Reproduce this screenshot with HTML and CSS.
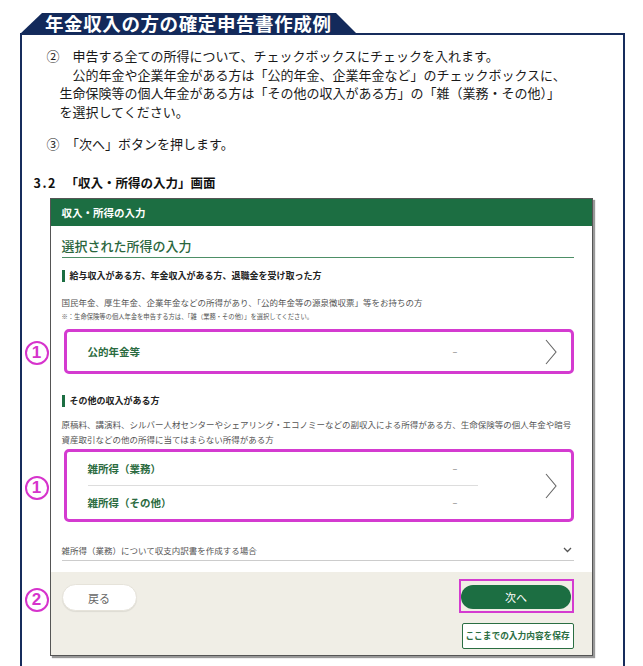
FILE: index.html
```html
<!DOCTYPE html>
<html lang="ja">
<head>
<meta charset="utf-8">
<link rel="stylesheet" href="styles.css">
</head>
<body>
<div class="page">
  <div class="tab">年金収入の方の確定申告書作成例</div>
  <div class="box">
    <div class="steps">
      <p class="step">
        <span class="l1">②　申告する全ての所得について、チェックボックスにチェックを入れます。</span>
        <span class="l2">公的年金や企業年金がある方は「公的年金、企業年金など」のチェックボックスに、</span>
        <span class="l3">生命保険等の個人年金がある方は「その他の収入がある方」の「雑（業務・その他）」</span>
        <span class="l3">を選択してください。</span>
      </p>
      <p class="step step3"><span class="l1">③　「次へ」ボタンを押します。</span></p>
    </div>
    <h2 class="sub"><span class="num">3.2</span>「収入・所得の入力」画面</h2>
    <div class="shot">
      <div class="shot-head">収入・所得の入力</div>
      <div class="shot-body">
        <div class="title">選択された所得の入力</div>
        <div class="sec-head">給与収入がある方、年金収入がある方、退職金を受け取った方</div>
        <div class="desc">国民年金、厚生年金、企業年金などの所得があり、「公的年金等の源泉徴収票」等をお持ちの方</div>
        <div class="note">※：生命保険等の個人年金を申告する方は、「雑（業務・その他）」を選択してください。</div>
        <div class="card card1">
          <span class="name">公的年金等</span>
          <span class="dash">–</span>
          <svg class="chev" width="12" height="26" viewBox="0 0 12 26"><path d="M1 1 L11 13 L1 25" fill="none" stroke="#666" stroke-width="1.1"/></svg>
        </div>
        <div class="sec-head sec2">その他の収入がある方</div>
        <div class="desc desc2">原稿料、講演料、シルバー人材センターやシェアリング・エコノミーなどの副収入による所得がある方、生命保険等の個人年金や暗号資産取引などの他の所得に当てはまらない所得がある方</div>
        <div class="card card2">
          <div class="rows">
            <div class="row"><span class="name">雑所得（業務）</span><span class="dash">–</span></div>
            <div class="row"><span class="name">雑所得（その他）</span><span class="dash">–</span></div>
          </div>
          <svg class="chev" width="12" height="26" viewBox="0 0 12 26"><path d="M1 1 L11 13 L1 25" fill="none" stroke="#666" stroke-width="1.1"/></svg>
        </div>
        <div class="collapse">
          <span>雑所得（業務）について収支内訳書を作成する場合</span>
          <svg width="9" height="6" viewBox="0 0 9 6"><path d="M1 1 L4.5 4.5 L8 1" fill="none" stroke="#555" stroke-width="1.3"/></svg>
        </div>
      </div>
      <div class="shot-foot">
        <div class="foot-row">
          <span class="btn-back">戻る</span>
          <span class="hl"><span class="btn-next">次へ</span></span>
        </div>
        <div class="foot-save"><span class="btn-save">ここまでの入力内容を保存</span></div>
      </div>
      <span class="mark m1">1</span>
      <span class="mark m2">1</span>
      <span class="mark m3">2</span>
    </div>
  </div>
</div>
</body>
</html>
```
FILE: styles.css
```css
html, body {
  margin: 0;
  padding: 0;
  background: #fff;
}
body {
  font-family: "Noto Sans CJK JP", "Noto Sans", sans-serif;
  color: #1a1a1a;
}
.page {
  padding: 13px 18px 0 20px;
}
.tab {
  width: 337px;
  height: 21px;
  line-height: 21px;
  background: #132a5b;
  color: #fff;
  font-weight: 700;
  font-size: 18.5px;
  letter-spacing: 0.6px;
  padding-left: 25px;
  box-sizing: border-box;
  clip-path: polygon(22px 0, calc(100% - 21px) 0, 100% 100%, 0 100%);
  white-space: nowrap;
}
.box {
  margin-top: -1px;
  border: 2.5px solid #172c5c;
  border-bottom: none;
  height: 640px;
}
.steps {
  padding-top: 12px;
  font-size: 13px;
  line-height: 18.5px;
  color: #1a1a1a;
}
.step {
  margin: 0;
}
.step span {
  display: block;
  white-space: nowrap;
}
.l1 { padding-left: 24.5px; }
.l2 { padding-left: 50.5px; }
.l3 { padding-left: 37.5px; }
.step3 {
  margin-top: 14px;
}
.sub {
  margin: 20px 0 0 0;
  padding-left: 11.5px;
  font-size: 12.5px;
  line-height: 18px;
  font-weight: 700;
  color: #111;
}
.sub .num {
  display: inline-block;
  width: 32px;
  letter-spacing: 1.5px;
}
.shot {
  position: relative;
  margin: 6px 0 0 27.5px;
  width: 543px;
  border: 1px solid #555;
  box-sizing: border-box;
  box-shadow: 2px 2px 1px #999;
  background: #fff;
}
.shot-head {
  height: 27px;
  line-height: 27px;
  background: #1c6e42;
  color: #fff;
  font-size: 10.5px;
  font-weight: 700;
  padding-left: 11px;
}
.shot-body {
  padding: 0 18px 0 11px;
}
.title {
  padding-top: 10px;
  font-size: 13px;
  font-weight: 500;
  line-height: 20px;
  color: #2a663d;
  border-bottom: 1.5px solid #4d8f66;
  padding-bottom: 1px;
}
.sec-head {
  margin-top: 12px;
  border-left: 3px solid #1c6e42;
  padding-left: 5px;
  font-size: 9px;
  line-height: 12px;
  font-weight: 700;
  color: #222;
}
.desc {
  margin-top: 14px;
  font-size: 8.5px;
  line-height: 13px;
  color: #555;
}
.note {
  margin-top: 3.5px;
  font-size: 6.3px;
  line-height: 10px;
  color: #555;
}
.card {
  margin-left: 2px;
  border: 3px solid #d43bd0;
  border-radius: 5px;
  box-sizing: border-box;
  width: 510px;
}
.card1 {
  margin-top: 7px;
  height: 45px;
  display: grid;
  grid-template-columns: 365px 92px 12px;
  align-items: center;
  padding-left: 21px;
}
.name {
  font-size: 10.5px;
  font-weight: 700;
  color: #2b6b40;
}
.dash {
  font-size: 9px;
  color: #777;
}
.chev {
  display: block;
}
.sec2 {
  margin-top: 21px;
}
.desc2 {
  margin-top: 9.5px;
  line-height: 15px;
}
.card2 {
  margin-top: 2.5px;
  height: 73px;
  display: grid;
  grid-template-columns: 390px 12px;
  column-gap: 67px;
  align-items: center;
  padding-left: 21px;
}
.rows {
  display: flex;
  flex-direction: column;
}
.row {
  height: 33px;
  display: grid;
  grid-template-columns: 365px 1fr;
  align-items: center;
}
.row + .row {
  border-top: 1px solid #ddd;
}
.collapse {
  margin-top: 20px;
  display: flex;
  justify-content: space-between;
  align-items: center;
  font-size: 8.5px;
  line-height: 16px;
  color: #555;
  padding-bottom: 2px;
  border-bottom: 1px solid #ccc;
  padding-right: 2px;
}
.shot-foot {
  margin-top: 11px;
  background: #f0eee6;
  padding: 7px 18px 6px 11px;
}
.foot-row {
  display: flex;
  justify-content: space-between;
  align-items: flex-start;
}
.btn-back {
  margin-top: 5px;
  width: 75px;
  height: 27px;
  line-height: 27px;
  border-radius: 14px;
  background: #fff;
  border: 1px solid #e6e3da;
  box-shadow: 0 1px 1px rgba(0,0,0,0.08);
  box-sizing: border-box;
  text-align: center;
  font-size: 11px;
  color: #666;
}
.hl {
  display: block;
  width: 115px;
  height: 34px;
  border: 2.5px solid #d43bd0;
  box-sizing: border-box;
  padding: 3.5px 0 0 0.5px;
}
.btn-next {
  display: block;
  width: 110px;
  height: 24px;
  line-height: 24px;
  border-radius: 12px;
  background: #1c6e42;
  color: #fff;
  text-align: center;
  font-size: 11px;
}
.foot-save {
  margin-top: 10px;
  display: flex;
  justify-content: flex-end;
}
.btn-save {
  display: block;
  width: 112px;
  height: 26px;
  line-height: 24px;
  border: 1px solid #2a6e42;
  border-radius: 2px;
  box-sizing: border-box;
  background: #fff;
  text-align: center;
  font-size: 8.7px;
  font-weight: 700;
  color: #2a6e42;
}
.mark {
  position: absolute;
  left: -26px;
  width: 24px;
  height: 24px;
  box-sizing: border-box;
  border: 2.5px solid #d633cc;
  border-radius: 50%;
  display: flex;
  align-items: center;
  justify-content: center;
  font-family: "Liberation Sans", Arial, sans-serif;
  font-size: 17px;
  font-weight: 700;
  color: #d633cc;
  background: #fff;
}
.m1 { top: 142px; }
.m2 { top: 277px; }
.m3 { top: 389px; }
```
